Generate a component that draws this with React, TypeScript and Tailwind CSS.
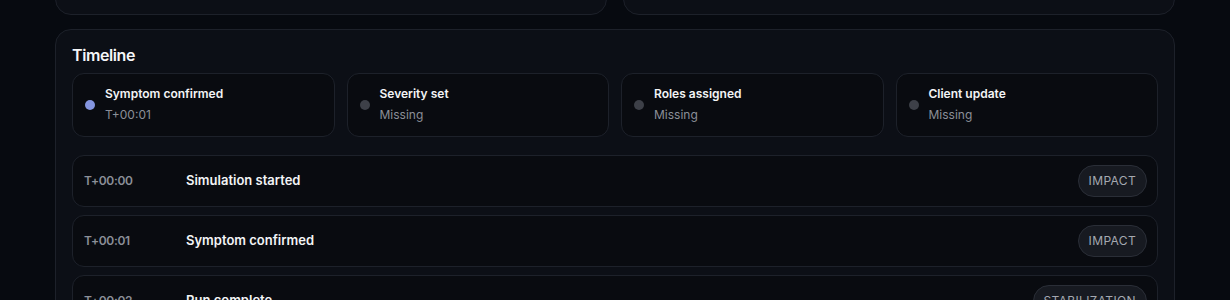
const checkpoints = [
  { label: "Symptom confirmed", value: "T+00:01", done: true },
  { label: "Severity set", value: "Missing", done: false },
  { label: "Roles assigned", value: "Missing", done: false },
  { label: "Client update", value: "Missing", done: false },
];

const events = [
  { time: "T+00:00", title: "Simulation started", phase: "Impact" },
  { time: "T+00:01", title: "Symptom confirmed", phase: "Impact" },
  { time: "T+00:02", title: "Run complete", phase: "Stabilization" },
];

export default function App() {
  return (
    <div
      className="h-[300px] w-full overflow-hidden bg-[#070a10] text-[#f3f4f6]"
      style={{ fontFamily: "Inter, 'Noto Sans', sans-serif" }}
    >
      <div className="mx-auto flex max-w-[1120px] flex-col gap-[14px]">
        <div className="-mt-[45px] grid grid-cols-2 gap-4">
          <div className="h-[60px] rounded-2xl border border-[#1d212a] bg-[#0c0f16]" />
          <div className="h-[60px] rounded-2xl border border-[#1d212a] bg-[#0c0f16]" />
        </div>

        <section className="rounded-2xl border border-[#1d212a] bg-[#0c0f16] px-4 pt-[13px] pb-4">
          <h2 className="mb-[6px] text-base leading-6 font-semibold tracking-tight text-[#f5f6f8]">
            Timeline
          </h2>

          <div className="grid grid-cols-4 gap-3">
            {checkpoints.map((c) => (
              <div
                key={c.label}
                className="flex items-center gap-2.5 rounded-xl border border-[#1d212a] bg-[#090b10] px-3 pt-[11px] pb-3"
              >
                <span
                  className={`h-2.5 w-2.5 shrink-0 rounded-full ${c.done ? "bg-[#8495e0]" : "bg-[#3d4048]"}`}
                />
                <div className="flex flex-col gap-[3px]">
                  <p className="text-xs leading-[18px] font-semibold text-[#f3f4f6]">
                    {c.label}
                  </p>
                  <p className="text-xs leading-[18px] text-[#8b8f98]">{c.value}</p>
                </div>
              </div>
            ))}
          </div>

          <div className="mt-[18px] flex flex-col gap-2">
            {events.map((e) => (
              <div
                key={e.time}
                className="flex items-center rounded-xl border border-[#1d212a] bg-[#090b10] py-[9px] pr-[10px] pl-[11px]"
              >
                <span className="w-[102px] shrink-0 text-xs font-semibold tracking-tight text-[#8b8f98]">
                  {e.time}
                </span>
                <span className="flex-1 text-[13px] font-semibold text-[#f3f4f6]">
                  {e.title}
                </span>
                <span className="rounded-full border border-[#2a2e37] bg-[#171a21] px-[10px] py-[7px] text-xs leading-4 tracking-[0.03em] text-[#a4a8b0] uppercase">
                  {e.phase}
                </span>
              </div>
            ))}
          </div>
        </section>
      </div>
    </div>
  );
}
